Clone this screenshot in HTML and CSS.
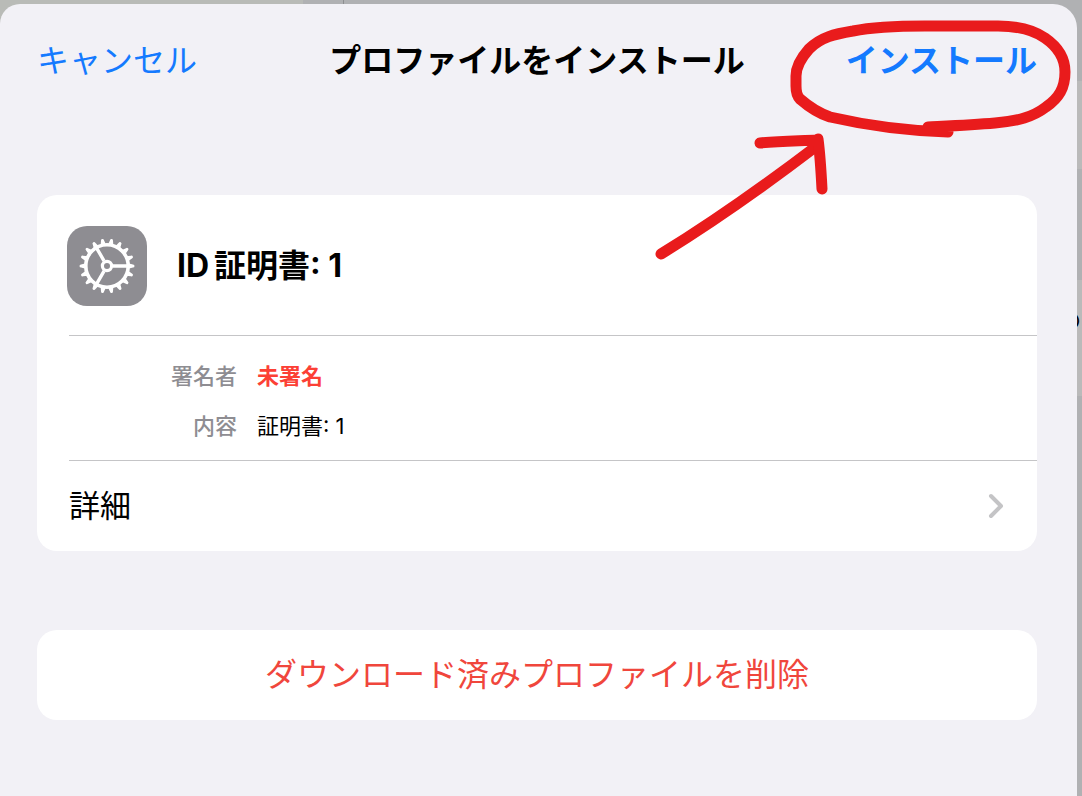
FILE: index.html
```html
<!DOCTYPE html>
<html lang="ja">
<head>
<meta charset="UTF-8" />
<meta name="viewport" content="width=device-width, initial-scale=1" />
<title>プロファイルをインストール</title>
<link rel="stylesheet" href="styles.css">
</head>
<body>

<!-- Dimmed screen behind the sheet -->
<div class="backdrop" aria-hidden="true">
  <div class="backdrop-sidebar"></div>
  <div class="backdrop-content">
    <div class="backdrop-row"></div>
    <div class="backdrop-row second">の</div>
  </div>
</div>

<main class="sheet">
  <header class="sheet-header">
    <button type="button" class="cancel-btn">キャンセル</button>
    <h1>プロファイルをインストール</h1>
    <button type="button" class="install-btn">インストール</button>
  </header>

  <section class="card">
    <div class="profile">
      <svg class="profile-icon" viewBox="0 0 80 80" aria-hidden="true">
        <defs>
          <path id="tooth" d="M61 37.2 L66 38.5 A1.5 1.5 0 0 1 66 41.5 L61 42.8 Z" />
        </defs>
        <g fill="#fff">
          <use href="#tooth" />
          <use href="#tooth" transform="rotate(20 40 40)" />
          <use href="#tooth" transform="rotate(40 40 40)" />
          <use href="#tooth" transform="rotate(60 40 40)" />
          <use href="#tooth" transform="rotate(80 40 40)" />
          <use href="#tooth" transform="rotate(100 40 40)" />
          <use href="#tooth" transform="rotate(120 40 40)" />
          <use href="#tooth" transform="rotate(140 40 40)" />
          <use href="#tooth" transform="rotate(160 40 40)" />
          <use href="#tooth" transform="rotate(180 40 40)" />
          <use href="#tooth" transform="rotate(200 40 40)" />
          <use href="#tooth" transform="rotate(220 40 40)" />
          <use href="#tooth" transform="rotate(240 40 40)" />
          <use href="#tooth" transform="rotate(260 40 40)" />
          <use href="#tooth" transform="rotate(280 40 40)" />
          <use href="#tooth" transform="rotate(300 40 40)" />
          <use href="#tooth" transform="rotate(320 40 40)" />
          <use href="#tooth" transform="rotate(340 40 40)" />
        </g>
        <g fill="none" stroke="#fff">
          <circle cx="40" cy="40" r="21.2" stroke-width="3.6" />
          <circle cx="40" cy="40" r="4.6" stroke-width="3.2" />
          <path d="M46 40 H61 M37 34.8 L29.5 21.8 M37 45.2 L29.5 58.2" stroke-width="3.4" />
        </g>
      </svg>
      <h2><span class="profile-type">ID</span>証明書: 1</h2>
    </div>
    <dl class="summary">
      <dt>署名者</dt>
      <dd class="unsigned">未署名</dd>
      <dt>内容</dt>
      <dd>証明書: 1</dd>
    </dl>
    <a href="#" class="details-link">
      詳細
      <svg class="chevron" viewBox="0 0 16 26" aria-hidden="true">
        <path d="M3 3 L13 13 L3 23" />
      </svg>
    </a>
  </section>

  <button type="button" class="remove-btn">ダウンロード済みプロファイルを削除</button>

  <!-- Hand-drawn circle and arrow pointing at the install button -->
  <svg class="marker" viewBox="0 0 437 270" aria-hidden="true">
    <path d="M308 132 C270 131 225 125 190 117 C178 113 168 106 160 99 C157 96 156 92 156 86 V76 C156 66 161 58 169 49 C181 37 195 34 213 31 C233 27 256 26 285 26 H358 C380 26 395 31 405 38 C418 47 425 58 425 72 C425 88 419 98 406 107 C393 117 378 121 355 123 C332 125 308 126 288 127" />
    <path d="M21 254 C70 224 115 193 178 145" />
    <path d="M120 143 C140 141 158 141 178 140 V139 C180 154 181 170 182 189" />
  </svg>
</main>

</body>
</html>
```

FILE: styles.css
```css
* {
  box-sizing: border-box;
}
body {
  margin: 0;
  min-height: 100vh;
  padding: 4px 5px 0 0;
  display: flex;
  overflow-x: hidden;
  font-family: Inter, "Noto Sans CJK JP", sans-serif;
  font-size: 32px;
  line-height: 40px;
  color: #000;
  background: #b0b1b3;
}
button {
  padding: 0;
  border: none;
  background: none;
  font: inherit;
  cursor: pointer;
}
h1,
h2,
dl,
dd {
  margin: 0;
}
h1,
h2 {
  font-size: 32px;
  font-weight: 700;
}

/* Backdrop */
.backdrop {
  position: absolute;
  inset: 0;
  display: flex;
  overflow: hidden;
}
.backdrop-sidebar {
  width: 28%;
  background: #b9bbb7;
}
.backdrop-content {
  flex: 1;
  padding-top: 81px;
  margin-left: 40px;
  border-left: 1px solid #8e8f91;
}
.backdrop-row {
  height: 88px;
  background: #bababa;
}
.backdrop-row.second {
  height: 116px;
  margin-top: 111px;
  padding: 20px 1px 0 0;
  text-align: right;
  font-size: 22px;
}

/* Sheet */
.sheet {
  position: relative;
  flex: 1;
  min-width: 0;
  padding: 0 40px 40px 37px;
  background: #f2f1f6;
  border-radius: 20px 24px 0 0;
}
.sheet-header {
  display: grid;
  grid-template-columns: 1fr auto 1fr;
  align-items: center;
  padding-top: 37px;
  margin-bottom: 114px;
}
.cancel-btn,
.install-btn {
  color: #147aff;
}
.cancel-btn {
  justify-self: start;
}
.install-btn {
  justify-self: end;
  font-weight: 700;
}

/* Profile card */
.card {
  padding-left: 32px;
  background: #fff;
  border-radius: 20px;
}
.profile {
  display: flex;
  align-items: center;
  gap: 30px;
  height: 140px;
  padding-top: 2px;
  margin-left: -2px;
}
.profile-icon {
  width: 80px;
  height: 80px;
  border-radius: 20px;
  background: #8e8d92;
}
.profile-type {
  margin-right: 5px;
}
.summary {
  display: grid;
  grid-template-columns: 168px 1fr;
  gap: 20px;
  padding: 25px 0 19px;
  border-top: 1px solid #c5c5c7;
  border-bottom: 1px solid #c5c5c7;
  font-size: 22px;
  line-height: 30px;
}
.summary dt {
  text-align: right;
  font-weight: 500;
  color: #8e8d92;
}
.summary .unsigned {
  font-weight: 700;
  color: #fc4035;
}
.details-link {
  display: flex;
  align-items: center;
  justify-content: space-between;
  height: 90px;
  padding-right: 33px;
  font-size: 31px;
  color: #000;
  text-decoration: none;
}
.chevron {
  width: 16px;
  height: 26px;
  fill: none;
  stroke: #c4c4c6;
  stroke-width: 4;
  stroke-linecap: round;
  stroke-linejoin: round;
}
.remove-btn {
  display: block;
  width: 100%;
  height: 90px;
  margin-top: 79px;
  border-radius: 20px;
  background: #fff;
  color: #f0463c;
}

/* Marker drawing over the header */
.marker {
  position: absolute;
  top: -4px;
  right: 0;
  width: 437px;
  height: 270px;
  fill: none;
  stroke: #e91b1c;
  stroke-width: 11;
  stroke-linecap: round;
  stroke-linejoin: round;
  pointer-events: none;
}
```
